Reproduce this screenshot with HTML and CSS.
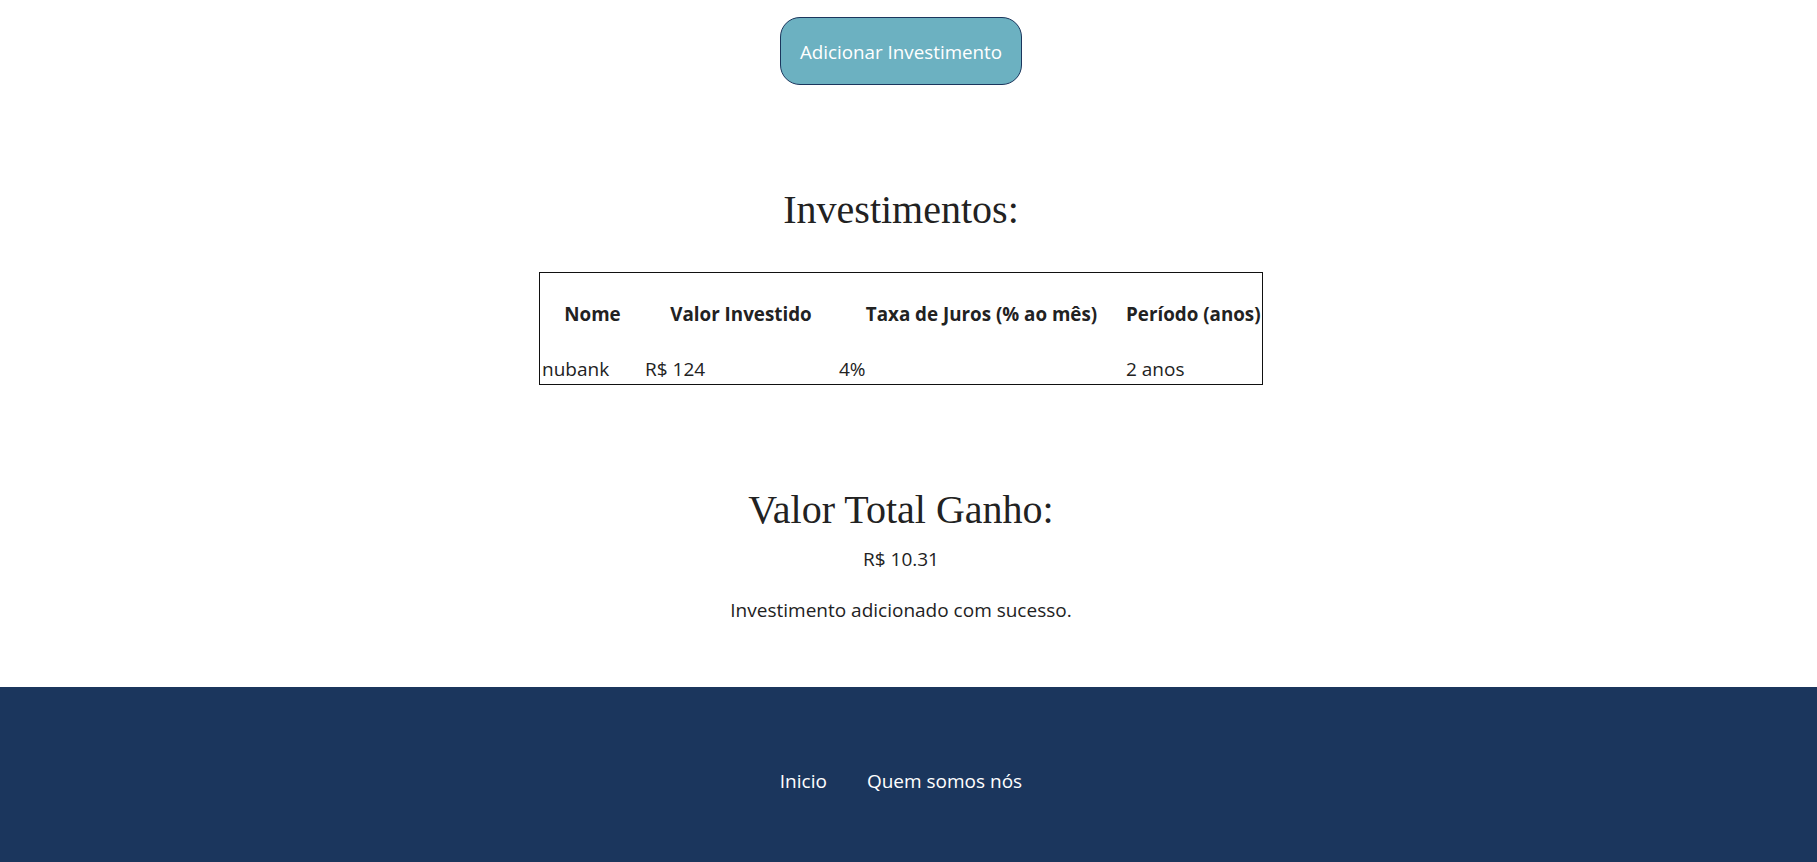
FILE: index.html
```html
<!DOCTYPE html>
<html lang="pt-BR">
<head>
<meta charset="utf-8">
<title>Investimentos</title>
<link rel="stylesheet" href="styles.css">
</head>
<body>
<main class="page">
  <div class="actions">
    <button class="btn-add" type="button">Adicionar Investimento</button>
  </div>
  <section class="investments">
    <h1 class="section-title">Investimentos:</h1>
    <table class="inv-table">
      <colgroup>
        <col class="c-nome">
        <col class="c-valor">
        <col class="c-taxa">
        <col class="c-periodo">
      </colgroup>
      <thead>
        <tr><th>Nome</th><th>Valor Investido</th><th>Taxa de Juros (% ao mês)</th><th>Período (anos)</th></tr>
      </thead>
      <tbody>
        <tr><td>nubank</td><td>R$ 124</td><td>4%</td><td>2 anos</td></tr>
      </tbody>
    </table>
  </section>
  <section class="total">
    <h1 class="section-title">Valor Total Ganho:</h1>
    <p class="total-value">R$ 10.31</p>
    <p class="message">Investimento adicionado com sucesso.</p>
  </section>
</main>
<footer class="site-footer">
  <nav class="footer-nav">
    <a class="footer-link" href="#">Inicio</a>
    <a class="footer-link" href="#">Quem somos nós</a>
  </nav>
</footer>
</body>
</html>
```

FILE: styles.css
```css
html, body {
  margin: 0;
  padding: 0;
  background: #ffffff;
}

body {
  font-family: "Open Sans", "Noto Sans", sans-serif;
  font-size: 19px;
  line-height: 27px;
  color: #222222;
}

.page {
  display: flex;
  flex-direction: column;
  align-items: center;
  padding-right: 15px;
}

.actions {
  padding-top: 17px;
  display: flex;
  justify-content: center;
}

.btn-add {
  font-family: inherit;
  font-size: 18.8px;
  line-height: 26px;
  color: #ffffff;
  background: #6cb1c1;
  border: 1px solid #1b365d;
  border-radius: 20px;
  padding: 21px 19px 19px;
  cursor: pointer;
}

.investments {
  margin-top: 102px;
  display: flex;
  flex-direction: column;
  align-items: center;
}

.section-title {
  font-family: "Liberation Serif", "Times New Roman", serif;
  font-size: 40px;
  line-height: 46px;
  font-weight: normal;
  margin: 0;
  color: #222222;
}

.inv-table {
  margin-top: 39px;
  width: 724px;
  table-layout: fixed;
  border: 1px solid #111111;
  border-spacing: 2px;
}

.c-nome { width: 101px; }
.c-valor { width: 192px; }
.c-taxa { width: 285px; }
.c-periodo { width: 134px; }

.inv-table th {
  font-size: 18.8px;
  font-weight: bold;
  text-align: center;
  padding: 26px 0 25px;
  white-space: nowrap;
}

.inv-table td {
  padding: 1px 0 0;
  line-height: 26px;
  text-align: left;
  white-space: nowrap;
}

.total {
  margin-top: 102px;
  display: flex;
  flex-direction: column;
  align-items: center;
}

.total-value {
  margin: 13px 0 0;
}

.message {
  margin: 24px 0 0;
}

.site-footer {
  margin-top: 63px;
  background: #1b365d;
  padding: 81px 15px 79px 0;
}

.footer-nav {
  display: flex;
  justify-content: center;
}

.footer-link {
  color: #ffffff;
  text-decoration: none;
  margin: 0 20px;
}
```
